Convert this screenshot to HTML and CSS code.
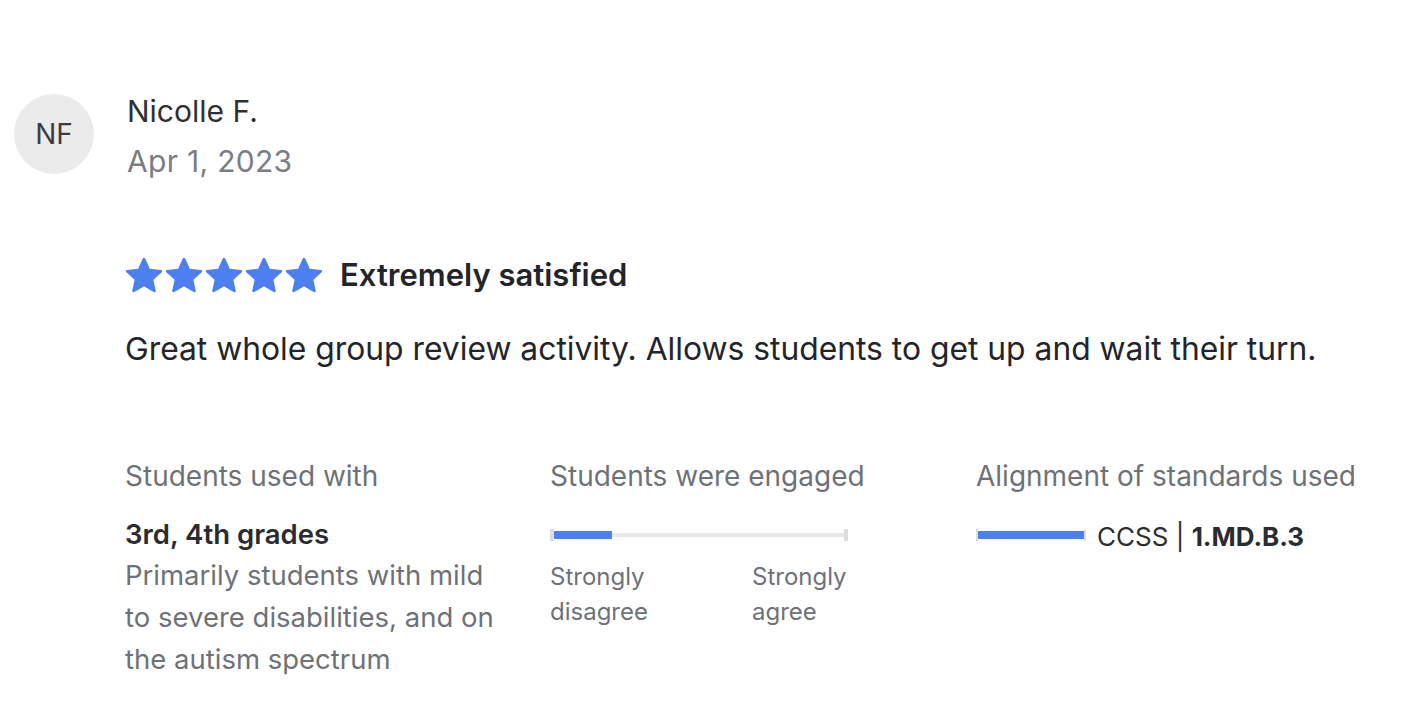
FILE: index.html
```html
<!DOCTYPE html>
<html lang="en">
<head>
<meta charset="utf-8">
<title>Review</title>
<link rel="stylesheet" href="styles.css">
</head>
<body>
<div class="review">
  <div class="author">
    <div class="avatar">NF</div>
    <div class="author-info">
      <div class="name">Nicolle F.</div>
      <div class="date">Apr 1, 2023</div>
    </div>
  </div>
  <div class="body">
    <div class="rating">
      <div class="stars">
        <svg class="star" viewBox="1.5 1.6 21 20"><path d="M12 2.8l2.75 6.05 6.6.65-4.95 4.45 1.4 6.5L12 17.1l-5.8 3.35 1.4-6.5L2.65 9.5l6.6-.65z"/></svg>
        <svg class="star" viewBox="1.5 1.6 21 20"><path d="M12 2.8l2.75 6.05 6.6.65-4.95 4.45 1.4 6.5L12 17.1l-5.8 3.35 1.4-6.5L2.65 9.5l6.6-.65z"/></svg>
        <svg class="star" viewBox="1.5 1.6 21 20"><path d="M12 2.8l2.75 6.05 6.6.65-4.95 4.45 1.4 6.5L12 17.1l-5.8 3.35 1.4-6.5L2.65 9.5l6.6-.65z"/></svg>
        <svg class="star" viewBox="1.5 1.6 21 20"><path d="M12 2.8l2.75 6.05 6.6.65-4.95 4.45 1.4 6.5L12 17.1l-5.8 3.35 1.4-6.5L2.65 9.5l6.6-.65z"/></svg>
        <svg class="star" viewBox="1.5 1.6 21 20"><path d="M12 2.8l2.75 6.05 6.6.65-4.95 4.45 1.4 6.5L12 17.1l-5.8 3.35 1.4-6.5L2.65 9.5l6.6-.65z"/></svg>
      </div>
      <span class="rating-label">Extremely satisfied</span>
    </div>
    <p class="text">Great whole group review activity. Allows students to get up and wait their turn.</p>
    <div class="details">
      <div class="col">
        <div class="col-title">Students used with</div>
        <div class="grades">3rd, 4th grades</div>
        <div class="desc">Primarily students with mild to severe disabilities, and on the autism spectrum</div>
      </div>
      <div class="col">
        <div class="col-title">Students were engaged</div>
        <div class="scale">
          <div class="track"><div class="fill" style="width: 20%"></div></div>
        </div>
        <div class="scale-labels">
          <span>Strongly<br>disagree</span>
          <span>Strongly<br>agree</span>
        </div>
      </div>
      <div class="col">
        <div class="col-title">Alignment of standards used</div>
        <div class="standard">
          <div class="scale short">
            <div class="track"><div class="fill" style="width: 100%"></div></div>
          </div>
          <span class="std-text">CCSS | <b>1.MD.B.3</b></span>
        </div>
      </div>
    </div>
  </div>
</div>
</body>
</html>
```

FILE: styles.css
```css
* { box-sizing: border-box; }
html, body { margin: 0; padding: 0; background: #ffffff; }
body {
  font-family: Inter, "Noto Sans", "Liberation Sans", sans-serif;
  color: #2a2c30;
}
.review {
  padding: 94px 0 0 14px;
}
.author {
  display: flex;
  align-items: flex-start;
  gap: 33px;
}
.avatar {
  width: 80px;
  height: 80px;
  border-radius: 50%;
  background: #ebebeb;
  color: #3b3d42;
  font-size: 28px;
  display: flex;
  align-items: center;
  justify-content: center;
}
.name {
  font-size: 30px;
  line-height: 34px;
  color: #2e3035;
}
.date {
  font-size: 30px;
  letter-spacing: 0.3px;
  line-height: 34px;
  margin-top: 16px;
  color: #7a7d83;
}
.body {
  padding-left: 111px;
}
.rating {
  display: flex;
  align-items: center;
  gap: 17px;
  margin-top: 78px;
}
.stars { display: flex; gap: 2px; }
.star {
  width: 38px;
  height: 36px;
  fill: #4c7ff0;
  stroke: #4c7ff0;
  stroke-width: 1.5;
  stroke-linejoin: round;
}
.rating-label {
  font-size: 31px;
  font-weight: 600;
  color: #23252a;
}
.text {
  margin: 36px 0 0 0;
  font-size: 31.8px;
  line-height: 40px;
  color: #23252a;
}
.details {
  display: grid;
  grid-template-columns: 425px 426px 1fr;
  margin-top: 90px;
}
.col-title {
  font-size: 28px;
  line-height: 34px;
  color: #6e7278;
}
.grades {
  margin-top: 24px;
  font-size: 27.5px;
  font-weight: 600;
  line-height: 34px;
  color: #2a2c30;
}
.desc {
  margin-top: 3px;
  font-size: 27.5px;
  line-height: 42px;
  color: #6e7278;
  max-width: 385px;
}
.scale {
  margin-top: 36px;
  width: 298px;
  height: 12px;
  border-left: 4px solid #dddddd;
  border-right: 4px solid #dddddd;
  display: flex;
  align-items: center;
}
.track {
  width: 100%;
  height: 4px;
  background: #e8e8e8;
  display: flex;
  align-items: center;
}
.fill {
  height: 8px;
  background: #4c7ff0;
}
.scale-labels {
  display: flex;
  width: 298px;
  justify-content: space-between;
  margin-top: 18px;
  font-size: 24px;
  line-height: 35px;
  color: #6e7278;
}
.scale-labels span { width: 96px; }
.standard {
  display: flex;
  align-items: center;
  gap: 11px;
  margin-top: 25px;
}
.scale.short {
  margin-top: 0;
  width: 110px;
  border-left-width: 2px;
  border-right-width: 2px;
}
.std-text {
  font-size: 26px;
  line-height: 34px;
  color: #2a2c30;
  position: relative;
  top: 2px;
}
.std-text b { font-weight: 700; }
```
